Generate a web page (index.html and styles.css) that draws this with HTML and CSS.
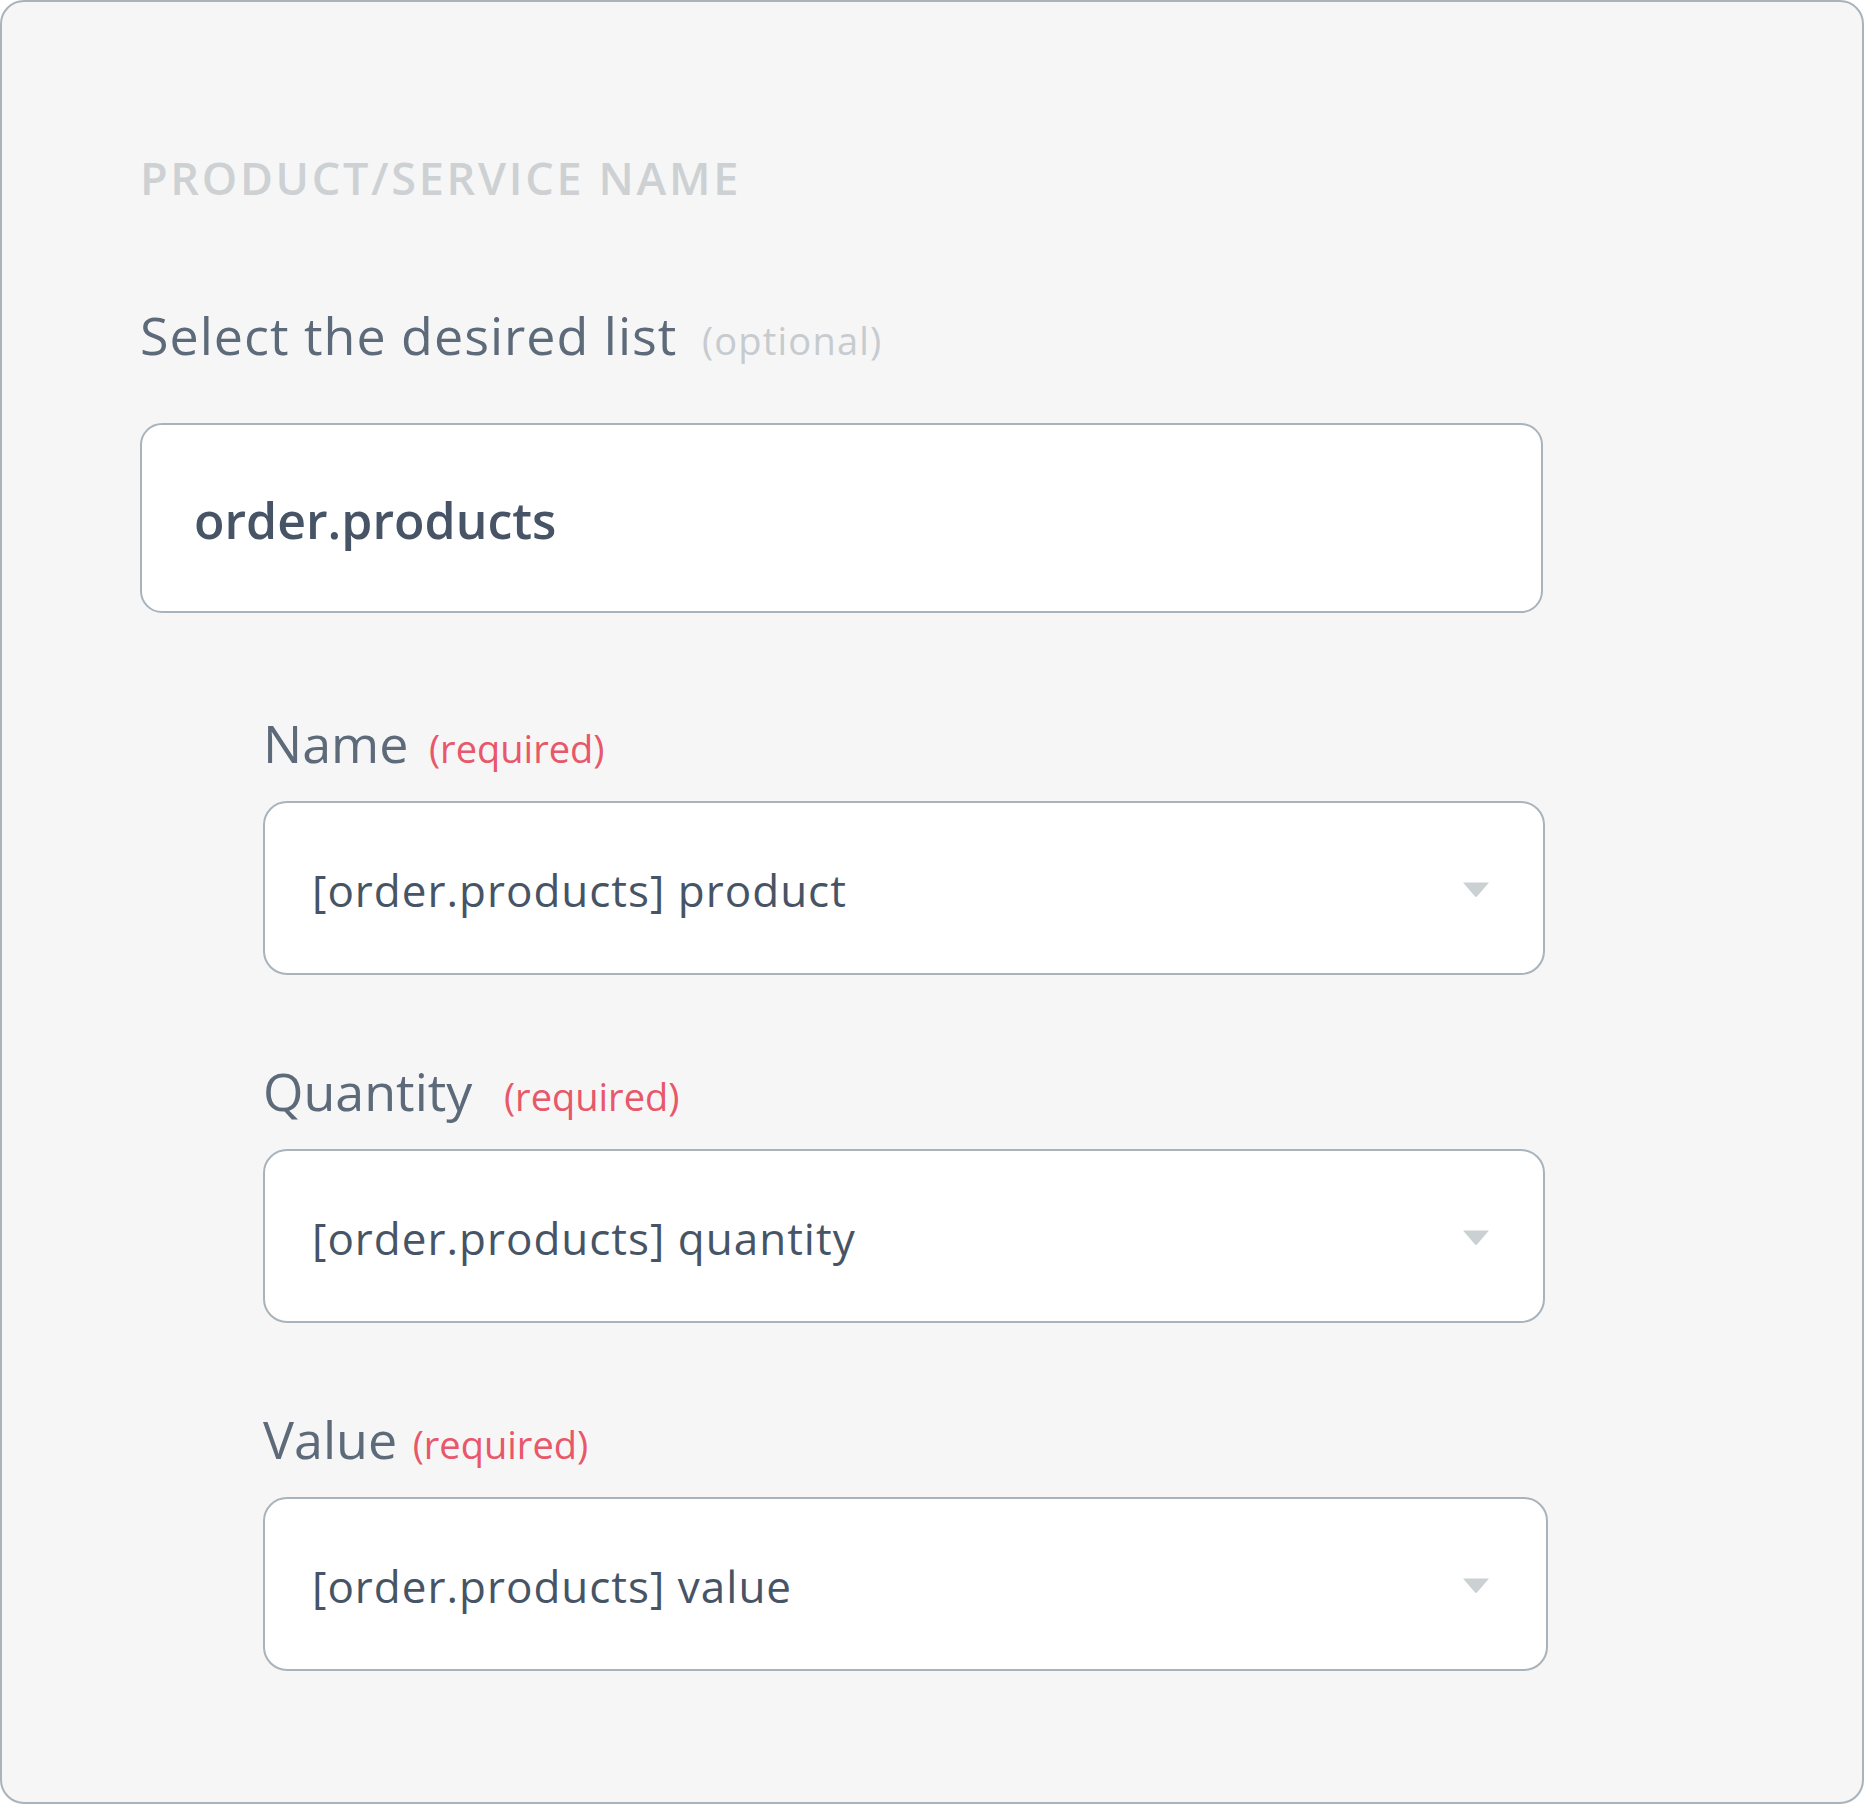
FILE: index.html
```html
<!DOCTYPE html>
<html lang="en">
<head>
    <meta charset="UTF-8">
    <meta name="viewport" content="width=device-width, initial-scale=1.0">
    <title>Product list mapping</title>
    <link rel="stylesheet" href="styles.css">
</head>
<body>
    <div class="card">
        <h2 class="section-title">PRODUCT/SERVICE NAME</h2>

        <label class="label label-main">Select the desired list <span class="hint optional">(optional)</span></label>
        <div class="input">order.products</div>

        <div class="fields">
            <label class="label">Name <span class="hint required">(required)</span></label>
            <div class="select">
                <span class="select-value">[order.products] product</span>
                <svg class="caret" width="28" height="16" viewBox="0 0 28 16"><path d="M1 0.5 H27 L15.2 14.2 Q14 15.4 12.8 14.2 Z" fill="#cbd0d3"/></svg>
            </div>

            <label class="label">Quantity <span class="hint required wide">(required)</span></label>
            <div class="select">
                <span class="select-value">[order.products] quantity</span>
                <svg class="caret" width="28" height="16" viewBox="0 0 28 16"><path d="M1 0.5 H27 L15.2 14.2 Q14 15.4 12.8 14.2 Z" fill="#cbd0d3"/></svg>
            </div>

            <label class="label">Value <span class="hint required narrow">(required)</span></label>
            <div class="select select-last">
                <span class="select-value">[order.products] value</span>
                <svg class="caret" width="28" height="16" viewBox="0 0 28 16"><path d="M1 0.5 H27 L15.2 14.2 Q14 15.4 12.8 14.2 Z" fill="#cbd0d3"/></svg>
            </div>
        </div>
    </div>
</body>
</html>
```

FILE: styles.css
```css
body {
    margin: 0;
    background: #ffffff;
    font-family: 'Open Sans', 'Lato', sans-serif;
}

.card {
    width: 1864px;
    box-sizing: border-box;
    padding: 153px 0 131px 138px;
    background: #f6f6f6;
    border: 2px solid #a9b3bb;
    border-radius: 24px;
}

.section-title {
    margin: 0;
    font-size: 45px;
    line-height: 45px;
    font-weight: 600;
    letter-spacing: 2.7px;
    color: #cdd1d4;
}

.label {
    display: block;
    margin-top: 90px;
    font-size: 52px;
    line-height: 52px;
    color: #5d6a7a;
}

.label-main {
    margin-top: 109px;
    letter-spacing: 1px;
}

.hint {
    margin-left: 7px;
    font-size: 38px;
    line-height: 1;
    letter-spacing: 0;
}

.optional {
    margin-left: 10px;
    letter-spacing: 1.2px;
    color: #c6cbcf;
}

.required {
    color: #e8576a;
}

.required.wide {
    margin-left: 18px;
}

.required.narrow {
    margin-left: 2px;
}

.input {
    width: 1403px;
    box-sizing: border-box;
    margin-top: 62px;
    padding: 70px 52px 66px;
    background: #fff;
    border: 2px solid #a9b3bb;
    border-radius: 22px;
    font-size: 50px;
    line-height: 50px;
    font-weight: 600;
    color: #475466;
}

.fields {
    margin-left: 123px;
}

.fields .label:first-child {
    margin-top: 104px;
}

.select {
    display: flex;
    justify-content: space-between;
    align-items: center;
    width: 1282px;
    box-sizing: border-box;
    margin-top: 32px;
    padding: 65px 53px 61px 47px;
    background: #fff;
    border: 2px solid #a9b3bb;
    border-radius: 24px;
}

.select-last {
    width: 1285px;
    padding-right: 56px;
}

.select-value {
    font-size: 44px;
    line-height: 44px;
    font-weight: 500;
    letter-spacing: 1px;
    color: #475466;
}

.caret {
    display: block;
}
```
